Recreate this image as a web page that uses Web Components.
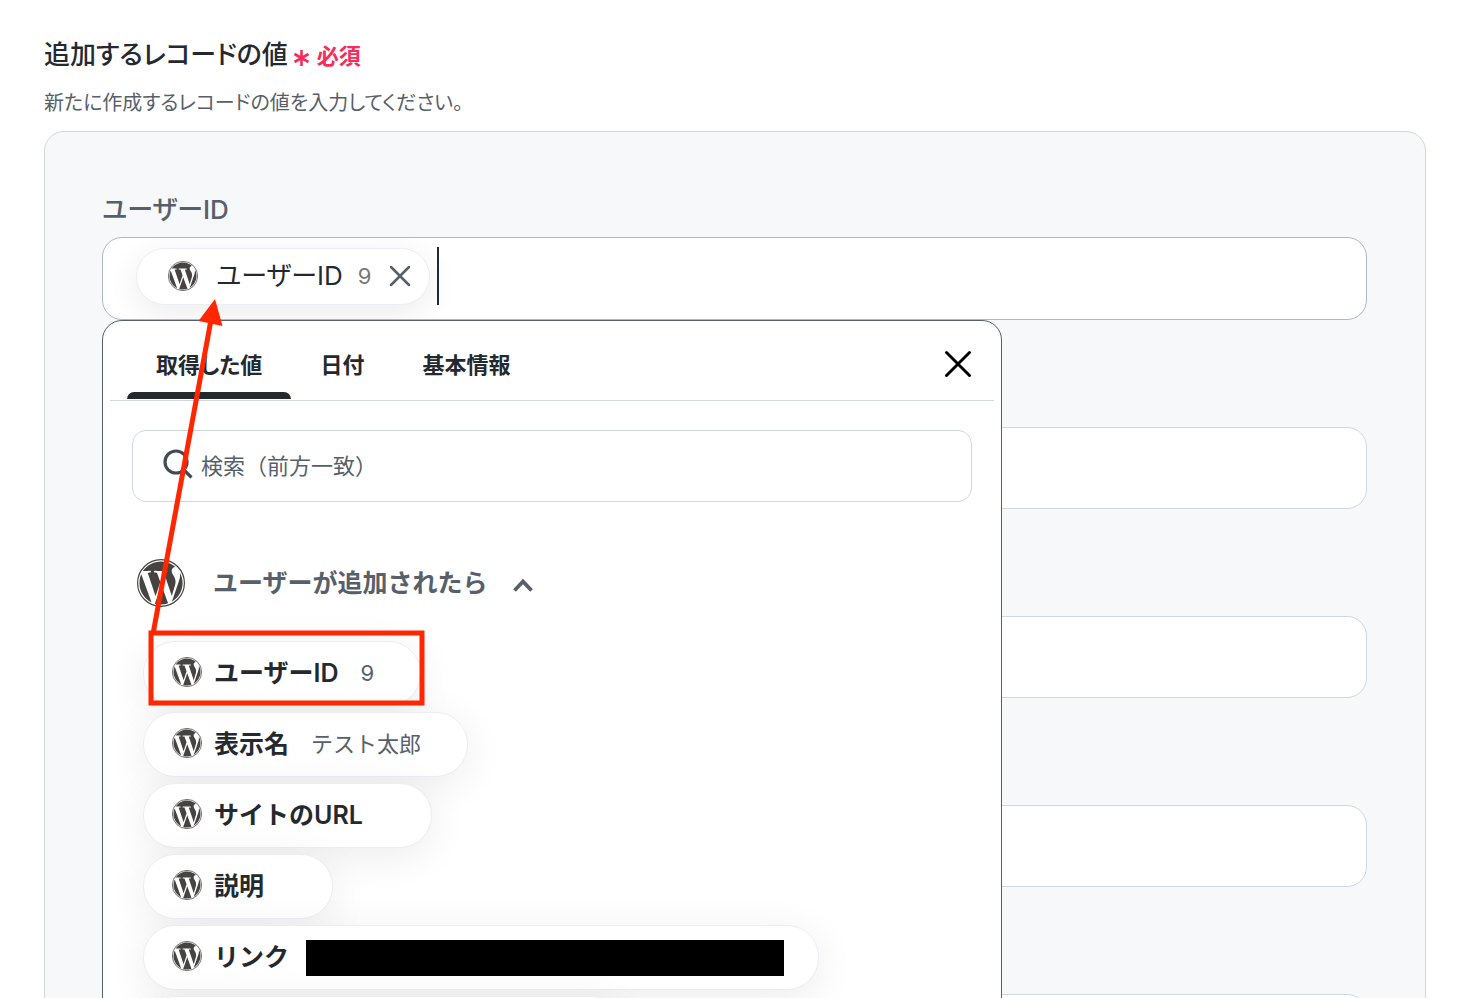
<!doctype html>
<html lang="ja">
<head>
<meta charset="utf-8">
<title>追加するレコードの値</title>
<style>
  body {
    margin: 0;
    height: 100vh;
    overflow: hidden;
    background: #fff;
    color: #24292f;
    font-family: Inter, "Noto Sans CJK JP", sans-serif;
    --muted: #57606a;
    --line: #d0d7de;
  }
  main { padding: 37px 38px 0 44px; }
</style>
</head>
<body>

<main>
  <form-heading>
    追加するレコードの値
    <span slot="note">新たに作成するレコードの値を入力してください。</span>
  </form-heading>

  <record-card>
    <record-field label="ユーザーID" active>
      <value-token value="9">ユーザーID</value-token>
      <value-picker slot="popup">
        <picker-tabs>
          <button role="tab" aria-selected="true">取得した値</button>
          <button role="tab" aria-selected="false">日付</button>
          <button role="tab" aria-selected="false">基本情報</button>
        </picker-tabs>
        <search-box placeholder="検索（前方一致）"></search-box>
        <value-group label="ユーザーが追加されたら">
          <value-chip value="9">ユーザーID</value-chip>
          <value-chip value="テスト太郎">表示名</value-chip>
          <value-chip>サイトのURL</value-chip>
          <value-chip>説明</value-chip>
          <value-chip masked>リンク</value-chip>
          <value-chip blank></value-chip>
        </value-group>
      </value-picker>
    </record-field>
    <record-field></record-field>
    <record-field></record-field>
    <record-field></record-field>
    <record-field></record-field>
  </record-card>
</main>
<arrow-note></arrow-note>

<script>
class Base extends HTMLElement {
    constructor() {
        super()
        this.attachShadow({mode: 'open'}).innerHTML = this.render()
    }
    attr(name) { return this.getAttribute(name) ?? '' }
}

class WpLogo extends Base {
    render() {
        return `
<style>
  :host { display: block; flex: none; width: 30px; height: 30px; color: #464342; }
  svg { display: block; width: 100%; height: 100%; }
</style>
<svg viewBox="0 0 24 24" fill="currentColor" aria-hidden="true">
  <circle cx="12" cy="12" r="11.7" fill="none" stroke="currentColor" stroke-width=".6"/>
  <path d="M21.469 6.825c.84 1.537 1.318 3.3 1.318 5.175 0 3.979-2.156 7.456-5.363 9.325l3.295-9.527c.615-1.54.82-2.771.82-3.864 0-.405-.026-.78-.07-1.109"/>
  <path d="M13.488 6.93c.647-.03 1.232-.105 1.232-.105.582-.075.514-.93-.067-.899 0 0-1.755.135-2.88.135-1.064 0-2.85-.15-2.85-.15-.585-.03-.661.855-.075.885 0 0 .54.061 1.125.09l1.68 4.605-2.37 7.08L5.354 6.9c.649-.03 1.234-.1 1.234-.1.585-.075.516-.93-.065-.896 0 0-1.746.138-2.874.138-.2 0-.438-.008-.69-.015C4.911 3.15 8.235 1.215 12 1.215c2.809 0 5.365 1.072 7.286 2.833-.046-.003-.091-.009-.141-.009-1.06 0-1.812.923-1.812 1.914 0 .89.513 1.643 1.06 2.531.411.72.89 1.643.89 2.977 0 .915-.354 1.994-.821 3.479l-1.075 3.585z"/>
  <path d="M12 22.784c-1.059 0-2.081-.153-3.048-.437l3.237-9.406 3.315 9.087c.024.053.05.101.078.149-1.12.393-2.325.607-3.582.607"/>
  <path d="M1.211 12c0-1.564.336-3.05.935-4.39L7.29 21.709C3.694 19.96 1.212 16.271 1.211 12"/>
</svg>
`
    }
}

class FormHeading extends Base {
    render() {
        return `
<style>
  :host { display: block; }
  .row { display: flex; align-items: center; gap: 5px; }
  h1 {
    margin: 0;
    font-size: 26px; line-height: 36px; font-weight: 500;
    font-feature-settings: "palt";
  }
  .required {
    display: flex; align-items: center; gap: 7px;
    padding-top: 2px;
    color: #f72c5b;
    font-size: 22px; line-height: 32px; font-weight: 600;
  }
  .required svg { margin-top: 4px; }
  .note {
    margin: 16px 0 0;
    color: var(--muted);
    font-size: 20px; line-height: 28px;
    font-feature-settings: "palt";
  }
</style>
<div class="row">
  <h1><slot></slot></h1>
  <div class="required">
    <svg width="17" height="18" viewBox="0 0 17 18" fill="none" stroke="currentColor" stroke-width="2.6" aria-hidden="true">
      <path d="M8.500 1v16M1.500 5l14 8M15.500 5l-14 8"/>
    </svg>
    必須
  </div>
</div>
<p class="note"><slot name="note"></slot></p>
`
    }
}

class RecordCard extends Base {
    render() {
        return `
<style>
  :host {
    display: flex;
    flex-direction: column;
    gap: 62px;
    margin-top: 14px;
    padding: 60px 58px 60px 57px;
    box-sizing: border-box;
    border: 1px solid var(--line);
    border-radius: 20px;
    background: #f6f8fa;
  }
</style>
<slot></slot>
`
    }
}

class RecordField extends Base {
    render() {
        let active = this.hasAttribute('active')
        return `
<style>
  :host { display: block; position: relative; }
  label {
    display: block;
    height: 36px;
    margin-bottom: 9px;
    color: var(--muted);
    font-size: 26px; line-height: 36px; font-weight: 500;
    font-feature-settings: "palt";
  }
  .box {
    display: flex;
    align-items: flex-start;
    min-height: 82px;
    box-sizing: border-box;
    padding: 9px 33px;
    border: 1px solid var(--line);
    border-radius: 20px;
    background: #fff;
  }
  :host([active]) .box { min-height: 83px; border-color: #afb8c1; overflow: hidden; }
  .caret { width: 2px; height: 58px; margin-left: 7px; background: #24292f; }
  input {
    flex: 1;
    min-width: 0;
    height: 56px;
    padding: 0;
    border: 0;
    outline: 0;
    background: none;
    font: inherit;
    font-size: 26px;
  }
  .popup { position: absolute; z-index: 1; top: 100%; left: 0; }
</style>
<label for="value">${this.attr('label')}</label>
<div class="box">
  <slot></slot>
  ${active ? '<span class="caret"></span>' : ''}
  <input id="value" type="text">
</div>
<div class="popup"><slot name="popup"></slot></div>
`
    }
}

// a value that has been put into a field
class ValueToken extends Base {
    render() {
        return `
<style>
  :host {
    display: flex;
    align-items: center;
    box-sizing: border-box;
    height: 57px;
    margin-top: 1px;
    padding: 0 18px 2px 31px;
    border: 1px solid #eaeef2;
    border-radius: 29px;
    background: #fff;
    box-shadow: 0 8px 32px rgba(0, 0, 0, .08);
    font-size: 26px;
    line-height: 36px;
    white-space: nowrap;
  }
  .name { margin: 0 15px 0 18px; font-feature-settings: "palt"; }
  .value { color: #777; font-size: 22px; }
  button {
    display: flex;
    margin-left: 18px;
    padding: 0;
    border: 0;
    background: none;
    color: var(--muted);
  }
</style>
<wp-logo></wp-logo>
<span class="name"><slot></slot></span>
<span class="value">${this.attr('value')}</span>
<button type="button" aria-label="削除">
  <svg width="22" height="22" viewBox="0 0 22 22" fill="none" stroke="currentColor" stroke-width="2.500" stroke-linecap="round">
    <path d="M2 2l18 18M20 2L2 20"/>
  </svg>
</button>
`
    }
}

class ValuePicker extends Base {
    render() {
        return `
<style>
  :host {
    display: block;
    box-sizing: border-box;
    width: 900px;
    padding: 0 7px;
    border: 1px solid #57606a;
    border-radius: 20px;
    background: #fff;
  }
</style>
<slot></slot>
`
    }
}

class PickerTabs extends Base {
    render() {
        return `
<style>
  :host {
    display: flex;
    justify-content: space-between;
    height: 80px;
    box-sizing: border-box;
    padding: 0 22px 0 17px;
    border-bottom: 1px solid var(--line);
  }
  [role=tablist] { display: flex; }
  ::slotted(button) {
    position: relative;
    padding: 9px 29px 0;
    border: 0;
    background: none;
    color: inherit;
    font: 600 22px/32px Inter, "Noto Sans CJK JP", sans-serif;
    font-feature-settings: "palt";
  }
  ::slotted(button[aria-selected=true])::after {
    content: "";
    position: absolute;
    left: 0; right: 0; bottom: 1px;
    height: 7px;
    border-radius: 7px 7px 0 0;
    background: #24292f;
  }
  .close {
    align-self: center;
    display: flex;
    margin-top: 7px;
    padding: 0;
    border: 0;
    background: none;
    color: #000;
  }
</style>
<div role="tablist"><slot></slot></div>
<button class="close" type="button" aria-label="閉じる">
  <svg width="28" height="28" viewBox="0 0 28 28" fill="none" stroke="currentColor" stroke-width="3" stroke-linecap="round">
    <path d="M2.500 2.500l23 23M25.500 2.500l-23 23"/>
  </svg>
</button>
`
    }
}

class SearchBox extends Base {
    render() {
        return `
<style>
  :host {
    display: flex;
    align-items: center;
    gap: 8px;
    height: 72px;
    box-sizing: border-box;
    margin: 29px 22px 0;
    padding: 0 30px;
    border: 1px solid var(--line);
    border-radius: 14px;
  }
  svg { flex: none; margin-bottom: 4px; color: #424a53; }
  input {
    flex: 1;
    min-width: 0;
    padding: 0;
    border: 0;
    outline: 0;
    background: none;
    color: inherit;
    font: inherit;
    font-size: 22px;
    line-height: 32px;
  }
  input::placeholder { color: var(--muted); opacity: 1; }
</style>
<svg width="30" height="30" viewBox="0 0 30 30" fill="none" stroke="currentColor" stroke-width="3.200" aria-hidden="true">
  <circle cx="13" cy="13" r="11"/>
  <path d="M20.500 20.500l8 8"/>
</svg>
<input type="search" aria-label="検索" placeholder="${this.attr('placeholder')}">
`
    }
}

class ValueGroup extends Base {
    render() {
        return `
<style>
  :host { display: block; margin-top: 57px; padding: 0 27px 40px; }
  .head {
    display: flex;
    align-items: center;
    padding: 0;
    border: 0;
    background: none;
    color: var(--muted);
    font: inherit;
    font-size: 25px; line-height: 36px; font-weight: 600;
  }
  .head wp-logo { width: 48px; height: 48px; margin-right: 28px; }
  .head svg { margin: 3px 0 0 25px; }
  .list {
    display: flex;
    flex-direction: column;
    align-items: flex-start;
    gap: 6px;
    padding: 34px 0 0 6px;
  }
</style>
<button class="head" type="button" aria-expanded="true">
  <wp-logo></wp-logo>
  ${this.attr('label')}
  <svg width="20" height="14" viewBox="0 0 20 14" fill="none" stroke="currentColor" stroke-width="3.800">
    <path d="M1.500 12.500L10 3.500l8.500 9"/>
  </svg>
</button>
<div class="list"><slot></slot></div>
`
    }
}

// one value on offer in the picker
class ValueChip extends Base {
    render() {
        return `
<style>
  :host { display: block; }
  button {
    display: flex;
    align-items: center;
    box-sizing: border-box;
    height: 65px;
    padding: 0 46px 2px 28px;
    border: 1px solid #eaeef2;
    border-radius: 32px;
    background: #fff;
    box-shadow: 0 8px 40px rgba(0, 0, 0, .08);
    color: inherit;
    font: inherit;
    font-size: 25px; line-height: 36px; font-weight: 600;
    white-space: nowrap;
  }
  wp-logo { margin-bottom: 2px; }
  .name { margin: 0 22px 0 12px; }
  .value { color: var(--muted); font-size: 22px; font-weight: 400; }
  :host([masked]) .value { width: 478px; height: 36px; margin: 2px -12px 0 -5px; background: #000; }
  :host([blank]) .value { width: 340px; }
</style>
<button type="button">
  <wp-logo></wp-logo>
  <span class="name"><slot></slot></span>
  <span class="value">${this.attr('value')}</span>
</button>
`
    }
}

// red frame and arrow laid over the page
class ArrowNote extends Base {
    render() {
        return `
<style>
  :host { position: absolute; z-index: 2; top: 0; left: 0; pointer-events: none; }
  svg { display: block; }
</style>
<svg width="440" height="720" viewBox="0 0 440 720" fill="none" stroke="#ff2600" stroke-width="5" aria-hidden="true">
  <rect x="151" y="633" width="271" height="70"/>
  <path d="M153 634L211 320"/>
  <path d="M215 299l-16.500 22 24 5z" fill="#ff2600" stroke="none"/>
</svg>
`
    }
}

customElements.define('wp-logo', WpLogo)
customElements.define('form-heading', FormHeading)
customElements.define('record-card', RecordCard)
customElements.define('record-field', RecordField)
customElements.define('value-token', ValueToken)
customElements.define('value-picker', ValuePicker)
customElements.define('picker-tabs', PickerTabs)
customElements.define('search-box', SearchBox)
customElements.define('value-group', ValueGroup)
customElements.define('value-chip', ValueChip)
customElements.define('arrow-note', ArrowNote)
</script>
</body>
</html>
